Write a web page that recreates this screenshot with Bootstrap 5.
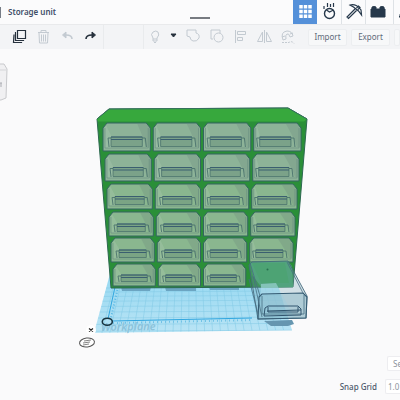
<!DOCTYPE html>
<html lang="en">
<head>
<meta charset="utf-8">
<meta name="viewport" content="width=device-width, initial-scale=1">
<title>Storage unit</title>
<link href="https://cdn.jsdelivr.net/npm/bootstrap@5.3.0/dist/css/bootstrap.min.css" rel="stylesheet">
<style>
body{font-family:"Noto Sans","Open Sans",sans-serif;font-size:8px;line-height:12px;color:#3d4b62;background:#fafafb}
.topbar{height:24px;background:#fbfbfc}
.doc-title{font-size:8px;line-height:12px;font-weight:600;color:#3f4e68;padding-left:7px}
.edge-mark{width:1px;height:11px;background:#777d87}
.notch{width:20px;height:2px;background:#777b81;top:17px;left:50%;margin-left:-10px}
.mode{width:24px;height:24px;color:#26384b}
.mode.active{background:#5490d9;color:#fff}
.mode.part,.tool-end{overflow:hidden}
.mode.part{width:7px}
.toolbar{height:25px;background:#f3f4f6;border-top:1px solid #e9eaec;padding-left:7px}
.tool{width:24px;height:24px;color:#c3cad1}
.tool.on{color:#26313d}
.tool.caret{width:13px;border-left:1px solid #e4e6e9}
.history{border-right:1px solid #e9ebed}
.shapes{border-left:1px solid #e9ebed;margin-left:39px}
.act{height:17px;background:#f7f8f9;border:1px solid #eceef0;color:#5f6b7a;font-size:8px;line-height:12px;width:39px;border-radius:2px}
.act.part{width:6px}
svg{display:block;fill:none;stroke:currentColor}
.scene{min-height:0}
.panel{right:0;bottom:6px}
.field{height:15px;background:#fff;border:1px solid #ededf0;border-right:0;font-size:8px;line-height:12px;color:#8c939d;border-radius:2px 0 0 2px;overflow:hidden;white-space:nowrap}
.settings{width:13px;padding-left:5px}
.snap{width:15px;padding-left:2px;appearance:none}
.snap-label{font-size:8px;line-height:12px;font-weight:500;color:#4d596b}
</style>
<script src="https://cdn.jsdelivr.net/npm/bootstrap@5.3.0/dist/js/bootstrap.bundle.min.js"></script>
</head>
<body class="vh-100 d-flex flex-column overflow-hidden">
<header class="topbar d-flex align-items-center position-relative flex-shrink-0">
  <span class="edge-mark"></span>
  <h1 class="doc-title mb-0">Storage unit</h1>
  <span class="notch position-absolute"></span>
  <nav class="d-flex ms-auto" aria-label="Modes">
    <button class="mode active border-0 p-0" aria-label="3D design"><svg width="24" height="24"><path d="M8 5v14M12.500 5v14M17 5v14" stroke="#fff" stroke-width="3.500" stroke-dasharray="3.500 1.200"/></svg></button>
    <button class="mode border-0 bg-transparent p-0" aria-label="Sim lab"><svg width="24" height="24" stroke-width="1.400"><circle cx="12.500" cy="13.500" r="5"/><path d="M9.500 10l3 2 4-2M7 6v3M10.500 3v4M13.500 4v3M16.500 3v4" stroke-width="1.200"/></svg></button>
    <button class="mode border-0 bg-transparent border-start p-0" aria-label="Blocks"><svg width="24" height="24" stroke-width="1.200"><path d="M8 5c4-1.500 9 1 11 5l.5 5-3-4-5-4zM13 9l-8 8 1.500 1.500 8-8M14.500 8l2-2 1.500 1.500-2 2"/></svg></button>
    <button class="mode border-0 border-start bg-transparent p-0 me-1" aria-label="Bricks"><svg width="24" height="24" stroke="none"><path fill="currentColor" d="M5 9h1V7q2-1 4 0v2h4V7q2-1 4 0v2h1v8H5z"/></svg></button>
    <button class="mode part border-0 border-start bg-transparent p-0" aria-label="Share"><svg width="8" height="24"><path d="M8 13q-3 1-2 3l-1 1h3"/></svg></button>
  </nav>
</header>

<div class="toolbar d-flex align-items-center flex-shrink-0" role="toolbar" aria-label="Edit">
  <div class="d-flex history">
    <button class="tool on border-0 bg-transparent p-0" aria-label="Duplicate"><svg width="24" height="24" stroke-width="1.200"><path d="M10.500 5.500h8v8h-8zM9 7.500H8.500v8h8V15M7 9.500l-.5 8h8V17"/></svg></button>
    <button class="tool border-0 bg-transparent p-0" aria-label="Delete"><svg width="24" height="24"><path d="M7 7.500h11M10 7V5.500h5V7M8 8l.500 10h8L17 8M10.500 9.500v7M12.500 9.500v7M14.500 9.500v7"/></svg></button>
    <button class="tool border-0 bg-transparent p-0" aria-label="Undo"><svg width="24" height="24"><path d="M17 14q0-4-6-4" stroke-width="1.600"/><path d="M11 7v6l-3.500-3z" fill="currentColor"/></svg></button>
    <button class="tool on border-0 bg-transparent p-0" aria-label="Redo"><svg width="24" height="24"><path d="M7 14q0-4 6-4" stroke-width="1.600"/><path d="M13 7v6l3.500-3z" fill="currentColor"/></svg></button>
  </div>
  <div class="d-flex shapes">
    <button class="tool border-0 bg-transparent p-0" aria-label="Show all"><svg width="24" height="24"><path d="M9 13q-3-4 0-6 3-2 5 0 2 3-1 6v3H9zM9 14h4M10 17.500h2"/></svg></button>
    <button class="tool caret on border-0 bg-transparent p-0" aria-label="Visibility options"><svg width="12" height="24" stroke="none"><path d="M3 9h5l-2.500 3z" fill="currentColor"/></svg></button>
    <button class="tool border-0 bg-transparent p-0" aria-label="Group"><svg width="24" height="24"><path d="M6 5h9v3q4 1 3 5-2 4-6 3-3-1-3-4L6 11z"/></svg></button>
    <button class="tool border-0 bg-transparent p-0" aria-label="Ungroup"><svg width="24" height="24"><path d="M8 14H6V5h9v3"/><circle cx="13.500" cy="12.500" r="4.500"/></svg></button>
    <button class="tool border-0 bg-transparent p-0" aria-label="Align"><svg width="24" height="24"><path d="M6.500 5v13M8.500 6.500h8v3h-8zM8.500 12.500h5v3h-5z"/></svg></button>
    <button class="tool border-0 bg-transparent p-0" aria-label="Mirror"><svg width="24" height="24"><path d="M11.500 5v13M9.500 7v9.500h-5zM13.500 7v9.500h5z"/></svg></button>
    <button class="tool border-0 bg-transparent p-0" aria-label="Magnet"><svg width="24" height="24"><path d="M6 15q-3-8 4-9 5 0 6 5l-3 1q-1-4-3-3-2 1-1 5zM5 12l3-1M13 9l3-1"/><path d="M5 17.500h7q3-2 5 1" stroke-dasharray="2 1"/></svg></button>
  </div>
  <div class="d-flex ms-auto tool-end">
    <button class="act p-0 me-1">Import</button>
    <button class="act p-0 me-1">Export</button>
    <button class="act part p-0" aria-label="Send to"></button>
  </div>
</div>

<main class="scene flex-grow-1 position-relative">
  <svg id="model" class="w-100 h-100" viewBox="0 49 400 351" role="img" aria-label="Storage unit with drawers on the workplane">
    <defs><linearGradient id="plane" x1="0" y1="0" x2="0" y2="1"><stop stop-color="#93d7f1"/><stop offset="1" stop-color="#b9e4f5"/></linearGradient></defs>
    <path d="M-2 64h6l3 5-1 29-5 2h-3" fill="#f0f0f2" stroke="#c8c9cc"/><path d="M-2 70h8" stroke="#d4d5d8"/><path d="M0 83h2M1 83v4" stroke="#aaacb2"/>
    <path d="M111 270h162l19 60-198 3z" fill="url(#plane)" stroke="none"/>
    <g id="grid" stroke="#80c8e5" stroke-width=".5"></g>
    <path d="M121 287h30l-1 4h-28zM165 287h31v4h-30zM209 287h30v3h-29z" fill="#6ba5c2" stroke="none"/>
    <path d="M115 287l-7 32M112 321l140-3" stroke="#31a7e0" stroke-width="1"/>
    <path d="M118 287l-7 31" stroke="#58b8e5" stroke-width="2" stroke-dasharray="1 2"/>
    <path d="M113 323l140-3" stroke="#70c2e7" stroke-width="2" stroke-dasharray="1 3"/>
    <text x="101" y="331" transform="rotate(-1 101 331)" font-size="11" font-style="italic" font-weight="600" font-family="Noto Sans, sans-serif" fill="#8cc2da" stroke="none">Workplane</text>
    <ellipse cx="107.300" cy="321.700" rx="5" ry="3.500" stroke="#17333f" stroke-width="1.600"/>
    <circle cx="91" cy="330" r="5" fill="#fff" stroke="none"/><path d="M89 328.500l4 3M93 328.500l-4 3" stroke="#222" stroke-width="1.200"/>
    <ellipse cx="87" cy="342.500" rx="7.500" ry="4.500" transform="rotate(-7 87 342.500)" stroke="#555" fill="#fff"/><path d="M84 341l7-1M83 343l7-1M83 345l6-1" stroke="#666" stroke-width=".8"/>
    <path d="M97 119l12-10 179-1 19 11-14 168-182 1z" fill="#2a8f38" stroke="#2c6850"/>
    <path d="M97 119l12-10 179-1 19 11-3 2.500H98z" fill="#37a83d" stroke="none"/>
    <path d="M97 119l12-10 179-1 19 11" stroke="#36705d"/>
    <g id="drawers" stroke-linejoin="round"></g>
    <path d="M250 262l38-1 4 5 1 21-31 1-9-12z" fill="#43a366" stroke="none"/>
    <path d="M252 263h33l4 20h-28z" fill="#3ca258" stroke="none"/>
    <path d="M264 321l28-1 2 4-6 2h-17z" fill="#6696b0" stroke="none"/>
    <path d="M249 265l3-3 36-1 19 35-1 22-48 1z" fill="#76a7b5" fill-opacity=".3" stroke="#456b7e" stroke-width=".9"/>
    <path d="M261 284l15-1 18 34-34 1z" fill="#b6e4f2" fill-opacity=".5" stroke="none"/>
    <path d="M259 297l3-3 41-1 4 4-1 21-48 1z" fill="#7fb0c1" fill-opacity=".42" stroke="#345b73" stroke-width="1.100"/>
    <path d="M250 263l10 33M287 262l16 31M249 279l9 35M253 276l9 41M262 296v18h42v-19" stroke="#486f83" stroke-width=".8"/>
    <path d="M264 316l1-8 3-2h30l3 3v6zM268 307v5h30v-5M267 311l34-1" stroke="#31556e" stroke-width="1"/>
    <circle cx="267.500" cy="269.500" r="1" fill="#286f50" stroke="none"/>
  </svg>
  <div class="panel position-absolute d-flex flex-column align-items-end">
    <button class="field settings py-0 pe-0 mb-1 text-start" aria-label="Settings">Se</button>
    <div class="d-flex align-items-center mt-1">
      <label for="snap" class="snap-label me-2">Snap Grid</label>
      <select id="snap" class="field snap py-0 pe-0"><option>1.0</option></select>
    </div>
  </div>
</main>
<script>
const ns = 'http://www.w3.org/2000/svg';
function draw(parent, d, attrs) {
  const p = document.createElementNS(ns, 'path');
  p.setAttribute('d', d);
  for (const k in attrs) p.setAttribute(k, attrs[k]);
  parent.appendChild(p);
}
// Workplane lines converge towards the back of the plane
const grid = document.getElementById('grid');
for (let i = 1; i < 25; i++) draw(grid, `M${111 + i * 6.5} 270L${94 + i * 7.9} ${333 - i / 8}`, {});
for (let y = 288, s = 4; y < 332; y += s, s += .4) draw(grid, `M${111 - (y - 270) * .27} ${y}L${273 + (y - 270) * .31} ${y - 1}`, {});

// Rows: left, right, top, bottom of the drawer fronts
const rows = [[103, 301, 123, 151], [105, 299, 154, 181], [107, 297, 184, 209], [109, 295, 212, 236], [111, 293, 238, 262], [113, 291, 264, 286]];
const g = document.getElementById('drawers');
rows.forEach(([l, r, t, b], row) => {
  const w = (r - l - 9) / 4, h = b - t;
  for (let c = 0; c < (row === 5 ? 3 : 4); c++) {
    const x = l + c * (w + 3), e = x + w, k = (1.5 - c) * .7;
    draw(g, `M${x} ${t + 5}L${x + 4} ${t}H${e - 4}L${e} ${t + 5}V${b}H${x}Z`, {fill: row < 2 ? '#8db398' : '#8ab78f', stroke: '#356561', 'stroke-width': 1});
    draw(g, `M${x + 3} ${t + 2}L${x + 7 + k} ${t + h * .45}V${b - 3}H${x + 2}V${t + 5}Z`, {fill: '#b0ccb5', 'fill-opacity': .3, stroke: 'none'});
    draw(g, `M${e - 14 + k} ${t + 1}H${e - 4}L${e - 1} ${t + 5}V${b - 4}H${e - 4}Q${e - 6} ${t + h * .6} ${e - 14 + k} ${t + 1}Z`, {fill: '#6d8a7d', 'fill-opacity': .3, stroke: 'none'});
    draw(g, `M${x + 2} ${t + 5}V${b - 3}H${e - 2}V${t + 5}`, {stroke: '#678c80', 'stroke-width': .6});
    const a = x + 4 + k, z = e - 6 + k, y = t + h * .5;
    draw(g, `M${a + 1} ${b - 4}L${a} ${y + 1}H${a + 3}M${z - 3} ${y + 1}H${z}L${z + 1} ${b - 4}`, {stroke: '#4b736d', 'stroke-width': .9});
    draw(g, `M${a + 3} ${y}H${z - 3}V${b - 4.5}H${a + 3}Z`, {fill: '#6a9279', 'fill-opacity': .5, stroke: '#4b736d', 'stroke-width': .8});
    draw(g, `M${a + 3} ${y}H${z - 3}M${a + 3} ${y + 2.5}H${z - 3}`, {stroke: '#3a5f70', 'stroke-width': 1});
  }
});
</script>
</body>
</html>
